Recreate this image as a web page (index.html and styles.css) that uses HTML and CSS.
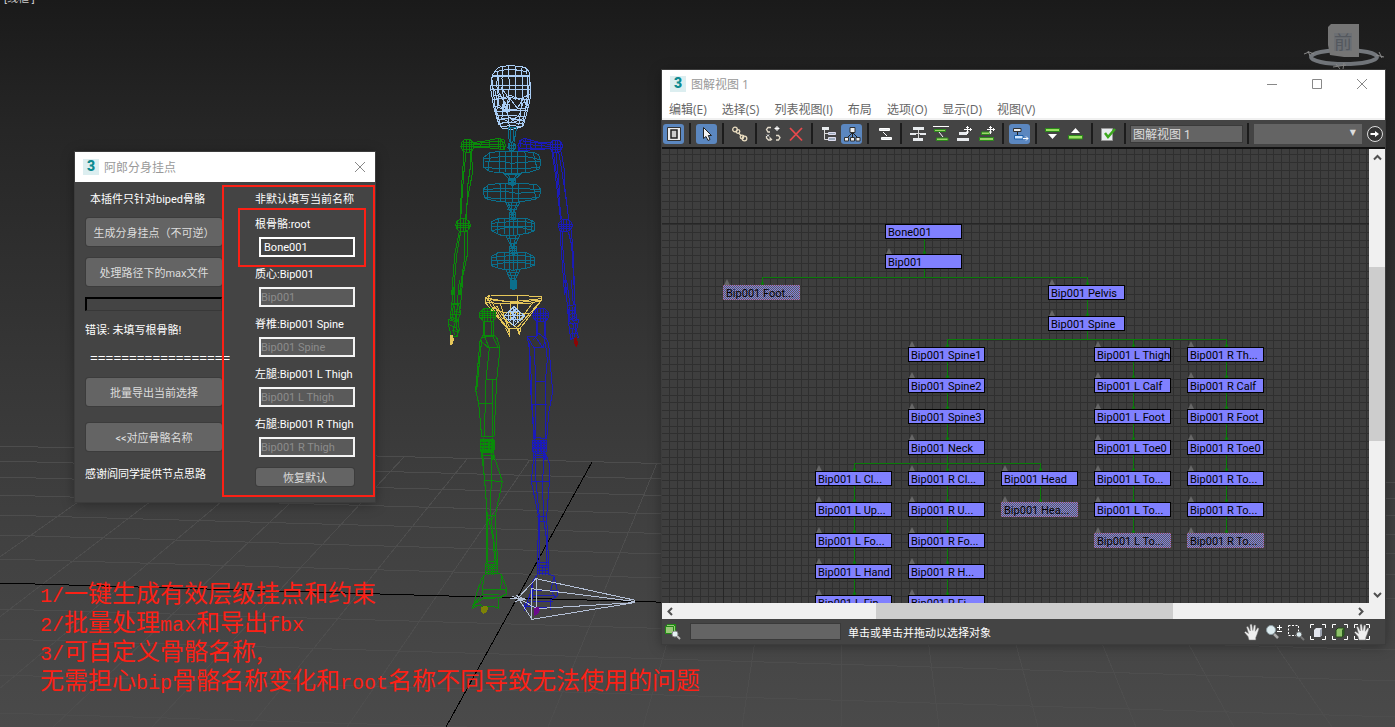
FILE: index.html
```html
<!DOCTYPE html>
<html lang="zh-CN">
<head>
  <meta charset="utf-8">
  <title>图解视图 1</title>
  <link rel="stylesheet" href="styles.css">
</head>
<body>
  <main class="viewport">
    <span class="view-label">[线框 ]</span>

    <svg class="scene" viewBox="0 0 1395 727" preserveAspectRatio="xMinYMin slice" aria-hidden="true">
      <!-- ground grid -->
      <g class="floor">
        <path d="M0 446L1395 483M0 461L1395 499M0 477L1395 516M0 495L1395 535M0 515L1395 554M0 535L1395 575M0 559L1395 599M0 609L1395 650M0 639L1395 681M0 675L1395 717M0 713L500 728"/>
        <path d="M152 450L-242 727M215 452L-144 727M278 454L-46 727M341 455L53 727M404 457L152 727M467 459L250 727M529 461L347 727M657 463L548 727M718 464L643 727M781 466L742 727M844 468L841 727M907 470L939 727M970 472L1038 727M1033 473L1136 727M1096 475L1234 727M1159 476L1332 727"/>
      </g>
      <path class="axis" d="M0 583L690 603M592 462L446 727"/>

      <!-- head, spine and arms -->
      <g class="wire" transform="translate(430 55) scale(.3333)">
        <g class="head">
          <path d="M205 37L238 31L285 37L297 50L301 90L300 135L290 175L279 214L250 223L217 221L203 200L190 150L182 100L187 60Z"/>
          <path d="M195 50L240 42L292 50M188 64H300M190 62H298M184 92L240 90L301 93M184 105H300M190 120L225 128L240 120L268 133L300 118M190 133L240 128L298 134M196 155L230 164L262 162L292 158M196 170L240 168H290M200 182L235 180L286 186M206 195L240 188L280 198M205 205L245 202L280 207M212 216L245 211L276 216"/>
          <path d="M218 36L216 70L220 130L222 165M235 32L238 90L232 160L238 215M257 33L257 100L258 135M275 38L277 90L276 130L272 170L266 210M204 48L200 90L206 130L200 170L214 218M290 45L294 95L290 140L284 178L276 215M194 105L206 150L225 168L240 130L262 160L280 130L292 160M205 60V110L225 145L215 190L240 203L268 180L280 140M212 95L240 135L225 160L235 185L255 200L280 190"/>
          <path d="M218 148H240V166H218ZM226 140L234 175M186 75L192 125L196 165L207 210M298 70L296 120L290 160"/>
        </g>
        <g class="spine">
          <path d="M234 216L238 262M242 217V265M250 217L249 262M260 217L252 262M236 217H261"/>
          <path d="M236 266L245 262L255 268L258 278L252 286L240 287L234 278ZM234 272H258M234 280H256M240 264V288M246 263V290M252 265V288"/>
          <path d="M160 308L180 293L210 289L275 289L312 293L326 300L333 320L328 342L300 351L250 357L180 350L160 336ZM163 312L210 305L290 305L330 314M163 337L210 341H285L328 336M180 293L174 345M208 291L209 350M228 289L226 352M245 290L246 356M263 290L264 355M285 292L286 352M310 295L322 345M165 320H220L245 325L330 318"/>
          <path d="M160 402L175 390L210 385L280 385L322 390L333 405L328 425L310 434L250 444L190 437L163 428ZM160 405L210 400H280L330 405M163 427L210 432L285 432L322 427M174 392V434M210 386L211 440M228 387V440M247 386L248 444M265 386L264 444M310 390L318 434M162 410L230 410L260 415L330 410"/>
          <path d="M185 500L205 491L240 489L290 490L312 500L314 527L296 534L250 542L210 540L185 528ZM185 505L230 501H290L314 506M186 527L225 519H280L312 527M205 492L202 536M225 490V538M240 490L237 541M252 490V542M264 490V540M287 490V536M305 495V532M187 515H310"/>
          <path d="M185 604L203 594L240 591L290 593L312 604L314 630L296 638L250 646L208 641L185 632ZM185 608L230 603H285L314 609M186 630L230 622H280L313 630M200 596L202 637M225 592L222 642M240 592L238 646M250 592V646M262 592V645M286 593V640M303 598V634M187 616H312"/>
          <path d="M220 355L246 380L275 355M232 356L246 378L262 356M228 445L246 480L270 443M236 445L247 480L260 445M246 445V480M228 543L247 582L270 542M238 543L248 582L258 543M228 645L248 690L270 645M238 646L249 685L260 646M222 360H274M230 452H266M232 464H262M232 552H264M236 565H260M230 652H266M234 662H262M238 672H258"/>
          <path d="M236 372H258V390H236ZM238 474H258V494H238ZM240 576H260V596H240ZM242 678H260V700L250 704L242 700ZM236 378H258M238 480H258M240 586H260M242 684H260M242 692H260M246 370V392M252 370V392M246 472V496M252 472V496M247 576V600M253 576V600M247 678V702M254 678V702M238 384H257M238 488H258M240 580H260"/>
        </g>
        <g class="green">
          <path d="M95 262L104 254H120L130 262L132 276L126 288L112 294L98 288L93 275ZM93 268H131M93 276H132M96 284H128M102 256V292M110 254V294M118 254V292M125 258V288M99 262H130"/>
          <path d="M130 262L155 260L205 250L222 254L226 272L222 284L155 276L130 279M132 266L205 258L224 262M155 260L150 278M180 254L178 278M205 250V283M212 252V284M131 274L224 276M131 270H222M215 256L222 282"/>
          <path d="M102 292L95 390L90 492M108 292L102 350L98 400L92 492M120 290L122 330L112 400L110 492M124 290L128 350L115 420L106 492M104 292H122"/>
          <path d="M80 500L90 492H108L118 500L121 512L116 524L106 530H90L80 522L77 510ZM77 506H120M77 512H122M79 519H119M84 496V526M92 490V530M100 490V530M108 492V528M115 498V524"/>
          <path d="M88 528L74 600L65 720M92 530L80 600L70 720M112 528L112 600L95 680L90 720M104 530L105 600L88 720"/>
        </g>
        <g class="blue">
          <path d="M361 264L370 256H385L395 262L398 276L392 288L378 294L366 290L360 280ZM360 270H398M360 277H398M363 284H395M368 258V292M376 256V294M384 256V294M391 260V290"/>
          <path d="M360 262L330 263L285 250L270 256L264 272L266 287L300 285L360 281M360 268L330 265L280 258M285 250L290 284M300 255L304 284M318 259V284M335 263V282M268 266L330 272L360 274M274 254L268 286M265 280H360"/>
          <path d="M366 292L375 350L383 420L392 496M370 292L380 360L394 492M386 292L396 350L408 430L416 492M394 290L404 350L405 400L416 492M378 294L390 420M404 352V376"/>
          <path d="M387 504L398 494H414L425 502L428 514L420 526L408 531H396L388 522L385 512ZM385 508H427M385 515H428M388 522H424M394 496V529M402 493V531M410 493V531M418 498V528"/>
          <path d="M390 526L395 600L404 720M396 530L400 600L410 720M415 530L425 570L434 720M424 526L430 600L434 720"/>
        </g>
      </g>

      <!-- hands, pelvis and thighs -->
      <g class="wire" transform="translate(430 280) scale(.3333)">
        <g class="green">
          <path d="M67 0L66 70L60 118M75 0L72 70M98 0L92 72L88 100M88 0L82 68M66 70H92M64 74L86 72L92 100L82 124L62 116L56 120V138L64 170M70 76L66 112L84 120L88 150L80 168L62 170M72 92L90 98M64 104H90M60 122L76 124L88 120M58 134L76 142L88 154M74 78L76 124L70 150L74 166M82 76L78 130L84 170M66 150L84 156"/>
        </g>
        <g class="blue">
          <path d="M404 0L412 75L418 110M410 0L420 75M433 0L435 75L440 118M424 0L430 76M412 77L436 74L432 110L446 120L440 150L445 172L422 178L416 130L414 100ZM420 80L418 124L430 134L426 176M428 80L426 120L438 132L434 170M414 92H434M414 104L434 100M416 118L442 122M418 132H440M420 146L442 148M422 160H444M416 112L448 120"/>
        </g>
        <path class="teal-fill" d="M242 0H260V22L250 29L240 23Z"/>
        <path class="bone-tip" d="M60 165L68 166L72 178L66 196H61Z"/>
        <path class="red-tip" d="M432 174L441 172L444 190L439 203L433 192Z"/>
        <g class="pelvis">
          <path d="M166 54L180 45L335 49V60L270 146H232L166 68ZM166 54L240 66L335 56M176 52L178 70L230 142M180 45L172 62M166 66L220 72H290L334 62M190 60L262 68L330 60M200 78L240 142M210 68L232 140M330 66L262 142M310 66L262 130M262 48L262 120M240 66L242 120M180 58L214 112L262 144M226 144L238 166L240 146M262 146L268 166L272 144M232 142L238 160M264 146L270 160M228 120L280 118M190 82L220 98L300 100"/>
        </g>
        <g class="head">
          <path d="M252 80L284 108L252 138L222 108ZM222 108H284M252 80V138M240 92L264 124M264 92L240 124M236 96H268V120H236ZM246 84L258 90L246 98L260 106L244 114L258 126"/>
        </g>
        <g class="green">
          <path d="M150 96L162 86H185L196 96L198 112L190 124H160L150 112ZM148 100H198M149 107H198M152 114H196M157 90V120M165 86V126M174 85V126M182 86V126M190 90V124M150 94H196"/>
          <path d="M160 126V166M164 126V168M186 126V166M190 124V168M158 166H192L200 172L210 205L200 300L192 470M158 166L150 185L145 240L137 330L146 370L155 470M154 172L192 168M152 182L176 204H210M155 180L140 330M164 170L178 205L168 300L163 470M190 172L206 205M168 300H200M188 300V470M146 370H188M155 470H192M160 474L158 540M188 474L190 540"/>
          <path d="M152 480H192V515H152ZM154 486H194M150 492H194M152 500H194M154 508H192M160 478V518M168 476V518M176 480V516M184 478V518M155 520L160 540M190 520L186 540M160 526H190"/>
        </g>
        <g class="blue">
          <path d="M310 94L322 85H342L354 96L356 110L348 124H320L310 112ZM306 100H356M306 108H356M310 116H352M316 90V120M324 86V126M332 85V126M340 86V126M348 92V122"/>
          <path d="M318 126L320 168M324 126V168M342 126L344 168M348 124V168M316 168L292 170L298 205L300 300L312 476M292 170L312 204H340L346 170L356 190L368 335L356 400L350 478M316 170L340 205M312 204L318 304L316 476M298 190L304 300L306 373L314 476M346 186L352 240L346 304V476M318 304H348M306 373H350M310 180L326 160L352 180M312 472L350 476M314 478L310 540M342 478L346 540"/>
          <path d="M308 482H350V516H308ZM306 490H350M308 498H350M310 506H350M316 480V518M324 480V518M332 482V516M340 480V518M312 520V540M344 520V540M312 526H348"/>
        </g>
      </g>

      <!-- shins, feet and root bone -->
      <g class="wire" transform="translate(430 440) scale(.3333)">
        <g class="green">
          <path d="M152 0H194V28L186 38H160L152 26ZM152 6H194M152 14H194M152 22H194M156 32H190M160 0V38M168 0V38M178 0V38M186 0V38"/>
          <path d="M158 38L162 100L170 200L168 375M154 36L164 120L172 230V372M186 38L184 80L182 225L200 372M190 40L217 125L196 226L203 372M162 120L217 125M160 48H190M168 226H196M170 236L182 240L194 226M176 238L190 300L194 372M170 364H202"/>
          <path d="M168 374H202V400H168ZM168 380H202M170 386H202M168 394H200M176 374V404M184 374V404M192 374V404"/>
          <path d="M170 400L156 414L140 460L128 506M200 398L214 404L228 440L230 462L206 474V506M162 406L158 440L156 465L128 496L206 502M216 404L212 446M156 448H226L230 462M156 464H206M158 474H216M128 496L158 476L196 474M128 504L152 494"/>
        </g>
        <g class="blue">
          <path d="M308 0H350V30L342 40H316L308 30ZM308 8H350M306 16H350M308 24H350M312 34H348M316 0V40M326 0V40M334 0V40M342 0V40"/>
          <path d="M312 40L304 125L326 230L322 375M316 40L318 125L328 230V375M342 40L338 125L340 230L350 300V375M346 40L358 70V130L350 230L356 376M304 125H358M312 52H352M322 230H350M326 244H348M322 368H356"/>
          <path d="M322 376H356V402H322ZM322 384H356M322 392H356M330 374V404M338 374V404M346 374V404"/>
          <path d="M324 402L310 420L298 470L284 510M354 402L372 408L382 450V468L362 480V510M308 424L306 480L284 500M306 452H380M306 468H372M308 484H370M284 500L340 502L364 504M284 490V512M372 412L362 450L376 472"/>
        </g>
        <path class="olive" d="M154 502L168 496L175 502L170 516L160 522L153 514Z"/>
        <path class="root-bone" d="M264 474L318 416L612 480L613 488L306 538ZM264 474L320 506L612 488M318 416L320 506M304 446V534M304 446L612 484M306 538L304 446M264 474L306 538M240 476H284M246 468L278 482M258 466L284 478L256 484"/>
        <path class="purple" d="M312 506L325 500L330 510L322 524L311 528Z"/>
      </g>
    </svg>

    <svg class="viewcube" viewBox="0 0 90 60" aria-hidden="true">
      <ellipse class="ring" cx="44" cy="42" rx="33" ry="7"/>
      <path class="ring-marks" d="M4 39L9 37L14 39M8 36L10 41M76 40L84 42M79 37L82 43M33 52L46 50M36 49L40 54M44 48L43 54"/>
      <path class="cube-side" d="M28 12L31 9H59V42H44L30 40L28 30Z"/>
      <rect class="cube-face" x="34" y="18" width="18" height="18"/>
      <text x="34" y="34">前</text>
    </svg>

    <section class="window tool-dialog">
      <header class="titlebar">
        <span class="app-icon">3</span>
        <h1>阿郎分身挂点</h1>
        <button class="caption-btn" aria-label="关闭">
          <svg viewBox="0 0 12 12"><path d="M1 1L11 11M11 1L1 11"/></svg>
        </button>
      </header>
      <div class="dialog-body">
        <div class="actions">
          <p class="note">本插件只针对biped骨骼</p>
          <button class="btn btn-first">生成分身挂点（不可逆）</button>
          <button class="btn">处理路径下的max文件</button>
          <div class="progress"></div>
          <p class="error">错误: 未填写根骨骼!</p>
          <p class="divider">==================</p>
          <button class="btn">批量导出当前选择</button>
          <button class="btn btn-toggle">&lt;&lt;对应骨骼名称</button>
          <p class="thanks">感谢阎同学提供节点思路</p>
        </div>
        <form class="bones">
          <p class="bones-title">非默认填写当前名称</p>
          <div class="field marked">
            <label for="root-bone">根骨骼:root</label>
            <input id="root-bone" type="text" value="Bone001">
          </div>
          <div class="field">
            <label for="mass-bone">质心:Bip001</label>
            <input id="mass-bone" type="text" value="Bip001" disabled>
          </div>
          <div class="field">
            <label for="spine-bone">脊椎:Bip001 Spine</label>
            <input id="spine-bone" type="text" value="Bip001 Spine" disabled>
          </div>
          <div class="field">
            <label for="left-bone">左腿:Bip001 L Thigh</label>
            <input id="left-bone" type="text" value="Bip001 L Thigh" disabled>
          </div>
          <div class="field">
            <label for="right-bone">右腿:Bip001 R Thigh</label>
            <input id="right-bone" type="text" value="Bip001 R Thigh" disabled>
          </div>
          <button class="btn btn-small" type="button">恢复默认</button>
        </form>
      </div>
    </section>

    <section class="window schematic">
      <header class="titlebar">
        <span class="app-icon">3</span>
        <h1>图解视图 1</h1>
        <button class="caption-btn" aria-label="最小化">
          <svg viewBox="0 0 12 12"><path d="M1 6.5H11"/></svg>
        </button>
        <button class="caption-btn" aria-label="最大化">
          <svg viewBox="0 0 12 12"><path d="M1.500 1.500H10.500V10.500H1.500Z"/></svg>
        </button>
        <button class="caption-btn" aria-label="关闭">
          <svg viewBox="0 0 12 12"><path d="M1 1L11 11M11 1L1 11"/></svg>
        </button>
      </header>
      <nav class="menubar">
        <a href="#">编辑(E)</a>
        <a href="#">选择(S)</a>
        <a href="#">列表视图(I)</a>
        <a href="#">布局</a>
        <a href="#">选项(O)</a>
        <a href="#">显示(D)</a>
        <a href="#">视图(V)</a>
      </nav>

      <div class="toolbar">
        <button class="tool active" aria-label="显示浮动框">
          <svg viewBox="0 0 18 18"><path fill="#eee" stroke="#333" d="M2.500 2.500H15.500V15.500H2.500Z"/><path fill="#ccc" stroke="#222" stroke-width="1.500" d="M6 5H12V13H6Z"/></svg>
        </button>
        <i class="sep"></i>
        <button class="tool active" aria-label="选择">
          <svg viewBox="0 0 18 18"><path fill="#f4f4f4" stroke="#222" d="M5.500 2.500V13.500L8 11.500L10 15.500L12 14.500L10.300 10.500H13.500Z"/></svg>
        </button>
        <i class="sep"></i>
        <button class="tool" aria-label="连接">
          <svg viewBox="0 0 18 18" fill="none" stroke="#e9dcc0" stroke-width="1.300"><circle cx="4" cy="4.500" r="2.300"/><circle cx="7" cy="6.500" r="1.800"/><path d="M7.500 8L10.500 11"/><circle cx="11" cy="12" r="1.800"/><circle cx="13.500" cy="13.500" r="2.300"/></svg>
        </button>
        <i class="sep"></i>
        <button class="tool" aria-label="断开选定对象">
          <svg viewBox="0 0 18 18" fill="none" stroke="#e4dccb" stroke-width="1.300"><path d="M7 2.500H4L2.500 4.500L4 7H6M12 10.500H14.500L16 12.500L14.500 15H12M2.500 11V13L4.500 15H7M5.500 12.500L8 15"/><path stroke="#fff" stroke-width="1" d="M13 1V6M10.500 3.500H15.500M11.500 2L14.500 5M14.500 2L11.500 5M3 9.500L5 11.500M5 9.500L3 11.500"/></svg>
        </button>
        <button class="tool" aria-label="删除对象">
          <svg viewBox="0 0 18 18" fill="none" stroke="#e8494c" stroke-width="1.800"><path d="M3 3L15 15.500M15 3L3 15.500"/></svg>
        </button>
        <i class="sep"></i>
        <button class="tool" aria-label="层次模式">
          <svg viewBox="0 0 18 18"><path fill="none" stroke="#ddd" d="M4.500 5V14.500H8M4.500 8.500H8"/><path fill="#e8ebee" d="M2 2H9V5H2Z"/><path fill="#9aa9bb" stroke="#dde" d="M8.500 7.500H15.500V9.500H8.500ZM8.500 12.500H15.500V15.500H8.500Z"/></svg>
        </button>
        <button class="tool active" aria-label="参考模式">
          <svg viewBox="0 0 18 18"><path fill="none" stroke="#222" d="M9.500 7V13M9 8L4 13M10 8L15 13"/><path fill="#f2f2f2" stroke="#333" d="M7 2.500H12V7.500H7ZM1.500 12.500H5.500V16H1.500ZM7.500 12.500H11.500V16H7.500ZM13 12.500H17V16H13Z"/></svg>
        </button>
        <i class="sep"></i>
        <button class="tool" aria-label="始终排列">
          <svg viewBox="0 0 18 18"><path fill="none" stroke="#fff" d="M7 7L11 11"/><path fill="#e8ebee" stroke="#fff" d="M3.500 3.500H13.500V5.500H3.500ZM5.500 12.500H15.500V14.500H5.500Z"/></svg>
        </button>
        <i class="sep"></i>
        <button class="tool" aria-label="排列子对象">
          <svg viewBox="0 0 18 18"><path fill="none" stroke="#ddd" d="M9.500 5V13M1 8.500H17"/><path fill="#e8ebee" d="M4 2H15V5H4ZM1 8H7V10H1ZM11 8H17V10H11ZM4 13H14V16H4Z"/></svg>
        </button>
        <button class="tool" aria-label="排列选定对象">
          <svg viewBox="0 0 18 18"><path fill="none" stroke="#fff" d="M1 1.500H17M7 7L11 12"/><path fill="#9bd36a" stroke="#2b8a1a" d="M2.500 4.500H13.500V6.500H2.500ZM4.500 13H16V15.500H4.500Z"/></svg>
        </button>
        <button class="tool" aria-label="释放所有对象">
          <svg viewBox="0 0 18 18"><path fill="#e8ebee" d="M4 7H12V10H4ZM2 13H14V16H2Z"/><path fill="none" stroke="#fff" d="M12.500 1V9M9 4.500H17M11 2.500H14M11 7H14M15.500 3V6"/></svg>
        </button>
        <button class="tool" aria-label="释放选定对象">
          <svg viewBox="0 0 18 18"><path fill="#9bd36a" stroke="#2b8a1a" d="M3.500 7H12V9.500H3.500ZM1.500 12.500H15.500V15.500H1.500Z"/><path fill="none" stroke="#fff" d="M12.500 1V9M9 4.500H17M11 2.500H14M11 7H14M15.500 3V6"/></svg>
        </button>
        <i class="sep"></i>
        <button class="tool active" aria-label="移动子对象">
          <svg viewBox="0 0 18 18"><path fill="#eee" stroke="#333" d="M2.500 3.500H10V6.500H2.500Z"/><path fill="none" stroke="#222" d="M6.500 7V11"/><path fill="#cfe5ff" stroke="#1b5fa8" d="M3.500 10.500H12V14H3.500Z"/><path fill="none" stroke="#fff" d="M12 13.500H17M15 11.500L17 13.500L15 15.500"/></svg>
        </button>
        <i class="sep"></i>
        <button class="tool" aria-label="展开选定项">
          <svg viewBox="0 0 18 18"><path fill="#9be063" stroke="#2b8a1a" d="M1.500 3.500H15.500V6.500H1.500Z"/><path fill="#fff" d="M4 9H13L8.500 14Z"/></svg>
        </button>
        <button class="tool" aria-label="折叠选定项">
          <svg viewBox="0 0 18 18"><path fill="#9be063" stroke="#2b8a1a" d="M1.500 10.500H15.500V14H1.500Z"/><path fill="#fff" d="M4 8H13L8.500 3Z"/></svg>
        </button>
        <i class="sep"></i>
        <button class="tool" aria-label="首选项">
          <svg viewBox="0 0 18 18"><path fill="#e8ebee" stroke="#999" d="M1.500 3.500H12.500V15.500H1.500Z"/><path fill="none" stroke="#3ca81e" stroke-width="2.500" d="M5 8L8 12L15 4"/></svg>
        </button>
        <i class="sep"></i>
        <input class="view-name" type="text" value="图解视图 1" aria-label="视图名称">
        <i class="sep"></i>
        <span class="bookmark">
          <select aria-label="书签名称"><option></option></select>
        </span>
        <button class="tool go" aria-label="转至书签">
          <svg viewBox="0 0 18 18"><circle cx="9" cy="9" r="7.500" fill="#333" stroke="#ddd"/><path fill="#fff" d="M4.500 8H9V6L13 9L9 12V10H4.500Z"/></svg>
        </button>
      </div>

      <div class="work-area">
        <div class="canvas">
          <svg class="links" aria-hidden="true">
            <defs>
              <pattern id="cells" width="31" height="31" x="30" y="13" patternUnits="userSpaceOnUse">
                <path d="M0 .5H31M0 8.500H31M0 16.500H31M0 23.500H31M.5 0V31M8.500 0V31M16.500 0V31M23.500 0V31"/>
              </pattern>
            </defs>
            <rect width="100%" height="100%" fill="url(#cells)"/>
            <path class="origin" d="M61.500 0V454M0 74.500H707"/>
            <path class="link" d="M262.500 90V103M262.500 120V128.500M100.500 134V128.500H425.500V134M425.500 151V165M425.500 182V190.500M285.500 196V190.500H564.500V196M471.500 190V196"/>
            <path class="link" d="M285.500 213V227M285.500 244V258M285.500 275V289M285.500 306V320M192.500 320V314.500H378.500V320M192.500 337V351M192.500 368V382M192.500 399V413M192.500 430V444M285.500 337V351M285.500 368V382M285.500 399V413M285.500 430V444M378.500 337V351"/>
            <path class="link" d="M471.500 213V227M471.500 244V258M471.500 275V289M471.500 306V320M471.500 337V351M471.500 368V382M564.500 213V227M564.500 244V258M564.500 275V289M564.500 306V320M564.500 337V351M564.500 368V382"/>
          </svg>
          <div class="node top" style="left:223px;top:75px">Bone001</div>
          <div class="node" style="left:223px;top:105px">Bip001</div>
          <div class="node hidden-bone" style="left:61px;top:136px">Bip001 Foot...</div>
          <div class="node" style="left:386px;top:136px">Bip001 Pelvis</div>
          <div class="node" style="left:386px;top:167px">Bip001 Spine</div>

          <div class="node" style="left:246px;top:198px">Bip001 Spine1</div>
          <div class="node" style="left:246px;top:229px">Bip001 Spine2</div>
          <div class="node" style="left:246px;top:260px">Bip001 Spine3</div>
          <div class="node" style="left:246px;top:291px">Bip001 Neck</div>

          <div class="node" style="left:153px;top:322px">Bip001 L Cl...</div>
          <div class="node" style="left:153px;top:353px">Bip001 L Up...</div>
          <div class="node" style="left:153px;top:384px">Bip001 L Fo...</div>
          <div class="node" style="left:153px;top:415px">Bip001 L Hand</div>
          <div class="node" style="left:153px;top:446px">Bip001 L Fin...</div>

          <div class="node" style="left:246px;top:322px">Bip001 R Cl...</div>
          <div class="node" style="left:246px;top:353px">Bip001 R U...</div>
          <div class="node" style="left:246px;top:384px">Bip001 R Fo...</div>
          <div class="node" style="left:246px;top:415px">Bip001 R H...</div>
          <div class="node" style="left:246px;top:446px">Bip001 R Fi...</div>

          <div class="node" style="left:339px;top:322px">Bip001 Head</div>
          <div class="node hidden-bone" style="left:339px;top:353px">Bip001 Hea...</div>

          <div class="node" style="left:432px;top:198px">Bip001 L Thigh</div>
          <div class="node" style="left:432px;top:229px">Bip001 L Calf</div>
          <div class="node" style="left:432px;top:260px">Bip001 L Foot</div>
          <div class="node" style="left:432px;top:291px">Bip001 L Toe0</div>
          <div class="node" style="left:432px;top:322px">Bip001 L To...</div>
          <div class="node" style="left:432px;top:353px">Bip001 L To...</div>
          <div class="node hidden-bone" style="left:432px;top:384px">Bip001 L To...</div>

          <div class="node" style="left:525px;top:198px">Bip001 R Th...</div>
          <div class="node" style="left:525px;top:229px">Bip001 R Calf</div>
          <div class="node" style="left:525px;top:260px">Bip001 R Foot</div>
          <div class="node" style="left:525px;top:291px">Bip001 R Toe0</div>
          <div class="node" style="left:525px;top:322px">Bip001 R To...</div>
          <div class="node" style="left:525px;top:353px">Bip001 R To...</div>
          <div class="node hidden-bone" style="left:525px;top:384px">Bip001 R To...</div>
        </div>
        <div class="scroll vertical">
          <svg viewBox="0 0 17 17"><path d="M5 10.500L8.500 7L12 10.500"/></svg>
          <div class="track"><span class="thumb"></span></div>
          <svg viewBox="0 0 17 17"><path d="M5 7L8.500 10.500L12 7"/></svg>
        </div>
      </div>
      <div class="scroll horizontal">
        <svg viewBox="0 0 17 17"><path d="M10 5L6.500 8.500L10 12"/></svg>
        <div class="track"><span class="thumb"></span></div>
        <svg viewBox="0 0 17 17"><path d="M7 5L10.500 8.500L7 12"/></svg>
      </div>

      <footer class="statusbar">
        <button class="tool" aria-label="缩放选定视口对象">
          <svg viewBox="0 0 18 18"><path fill="#9bc77a" stroke="#1f8a14" d="M1.500 3.500L3.500 1.500H11.500V8.500L9.500 10.500H1.500ZM1.500 3.500H9.500V10.500M9.500 3.500L11.500 1.500"/><circle cx="11" cy="11" r="3" fill="#e6f2f4" stroke="#888"/><path stroke="#bbb" stroke-width="2" d="M13 13L16 16"/></svg>
        </button>
        <input class="find" type="text" aria-label="查找">
        <span class="hint">单击或单击并拖动以选择对象</span>
        <div class="nav-tools">
          <button class="tool" aria-label="平移">
            <svg viewBox="0 0 18 18"><path id="hand" fill="#eee" stroke="#777" stroke-width=".5" d="M6 17L5 13.500L1.500 9.500L2.500 8.500L5.500 10.500L3.500 4L5 3.500L7.300 8L7 1.500L8.800 1.300L9.800 7.500L11 2L12.700 2.300L12.300 8.300L14.600 4.800L16 5.500L14 11.500L12.800 14.500V17Z"/></svg>
          </button>
          <button class="tool" aria-label="缩放">
            <svg viewBox="0 0 18 18"><circle cx="6" cy="7" r="4.500" fill="#dcebef" stroke="#8a9aa0"/><path stroke="#aaa" stroke-width="2.500" d="M9 11L13 15"/><path stroke="#fff" d="M12 4.500H17M14.500 2V7M12 8.500H17"/></svg>
          </button>
          <button class="tool" aria-label="缩放区域">
            <svg viewBox="0 0 18 18"><path fill="none" stroke="#fff" stroke-dasharray="2 1.500" d="M1.500 2.500H11.500V12.500H1.500Z"/><circle cx="12" cy="11.500" r="2.800" fill="#dcebef" stroke="#666"/><path stroke="#777" stroke-width="2" d="M14 14L17 17"/></svg>
          </button>
          <button class="tool" aria-label="最大化显示">
            <svg viewBox="0 0 18 18"><path fill="none" stroke="#fff" d="M1.500 5V1.500H5M13 1.500H16.500V5M1.500 13V16.500H5M13 16.500H16.500V13"/><path fill="#e3e6ee" d="M5 7L7 5H13V12L11 14H5Z"/><path fill="#99a0ae" d="M11 7L13 5V12L11 14Z"/></svg>
          </button>
          <button class="tool" aria-label="最大化显示选定对象">
            <svg viewBox="0 0 18 18"><path fill="none" stroke="#fff" d="M1.500 5V1.500H5M13 1.500H16.500V5M1.500 13V16.500H5M13 16.500H16.500V13"/><path fill="#8ec26a" stroke="#244d18" d="M5 7L7 5H13V12L11 14H5Z"/><path fill="#2c5b20" d="M11 7L13 5V12L11 14Z"/></svg>
          </button>
          <button class="tool" aria-label="平移至选定对象">
            <svg viewBox="0 0 18 18"><path fill="none" stroke="#fff" d="M1.500 5V1.500H5M13 1.500H16.500V5M1.500 13V16.500H5M13 16.500H16.500V13"/><use href="#hand"/></svg>
          </button>
        </div>
      </footer>
    </section>

    <div class="captions">
      <p><span>1/</span>一键生成有效层级挂点和约束</p>
      <p><span>2/</span>批量处理<span>max</span>和导出<span>fbx</span></p>
      <p><span>3/</span>可自定义骨骼名称,</p>
      <p>无需担心<span>bip</span>骨骼名称变化和<span>root</span>名称不同导致无法使用的问题</p>
    </div>
  </main>
</body>
</html>
```

FILE: styles.css
```css
:root {
  --panel: #444;
  --control: #646464;
  --node: #8080ff;
  --link: #0a7d0a;
  --mark: #fc2015;
  --active: #5b87c0;
  --ui-font: Roboto, "Noto Sans CJK SC", sans-serif;
}

* {
  box-sizing: border-box;
}

body {
  margin: 0;
  font-family: var(--ui-font);
  font-size: 11px;
  color: #fff;
}

p, h1 {
  margin: 0;
  font-weight: normal;
}

button, input, select {
  font: inherit;
  color: inherit;
  margin: 0;
  padding: 0;
  border: 0;
  border-radius: 0;
}

button {
  background: none;
}

/* 3D viewport */
.viewport {
  position: relative;
  min-height: 100vh;
  overflow: hidden;
  background: linear-gradient(#1a1a1a, #262626 18%, #363636 50%, #404040 72%, #4a4a4a);
}

.view-label {
  position: absolute;
  left: 4px;
  top: -9px;
  line-height: 16px;
  color: #ccc;
}

.scene {
  position: absolute;
  inset: 0;
  width: 100%;
  height: 100%;
  fill: none;
  shape-rendering: crispEdges;
}

.floor {
  stroke: #4d4d4d;
}

.axis {
  stroke: #000;
}

.wire path {
  vector-effect: non-scaling-stroke;
}

.head { stroke: #a9cdf5; }
.spine { stroke: #0b6f8c; }
.green { stroke: #0a8a0a; }
.blue { stroke: #1b1bb8; }
.pelvis { stroke: #e6c75a; }
.root-bone { stroke: #b4c0d6; }
.teal-fill { fill: #0b6f8c; }
.bone-tip { fill: #e6c75a; }
.red-tip { fill: #8c0505; }
.olive { fill: #7d8206; }
.purple { fill: #6b0a8c; }

.viewcube {
  position: absolute;
  top: 15px;
  right: 5px;
  width: 90px;
  height: 60px;
  fill: none;
}

.ring {
  stroke: #73777c;
  stroke-width: 4;
}

.ring-marks {
  stroke: #8b8b8b;
}

.cube-side {
  fill: #757575;
}

.cube-face {
  fill: #6c6f73;
}

.viewcube text {
  fill: #54585e;
  font-size: 18px;
}

/* Windows */
.window {
  position: absolute;
  background: var(--panel);
  box-shadow: 0 0 0 1px #3c3c3c, 0 2px 12px rgba(0, 0, 0, 0.35);
}

.titlebar {
  display: flex;
  align-items: center;
  height: 28px;
  padding: 0 1px 0 8px;
  background: #fff;
  color: #999;
}

.titlebar h1 {
  flex: 1;
  margin-left: 5px;
  font-family: "Open Sans", "Noto Sans CJK SC", sans-serif;
  font-size: 12px;
}

.app-icon {
  width: 16px;
  height: 16px;
  background: #dceef0;
  color: #0d8a90;
  font: 900 14px/15px Roboto, sans-serif;
  text-align: center;
}

.caption-btn {
  width: 45px;
  height: 28px;
  display: flex;
  align-items: center;
  justify-content: center;
}

.caption-btn svg {
  width: 12px;
  height: 12px;
  fill: none;
  stroke: #888;
}

/* Tool dialog */
.tool-dialog {
  left: 75px;
  top: 152px;
  width: 300px;
}

.tool-dialog .titlebar {
  height: 30px;
}

.tool-dialog .caption-btn {
  width: 28px;
}

.dialog-body {
  display: grid;
  grid-template-columns: 147px 1fr;
  padding-bottom: 5px;
}

.dialog-body p,
.dialog-body label {
  display: block;
  line-height: 16px;
  white-space: nowrap;
}

.actions {
  display: flex;
  flex-direction: column;
  padding: 10px 0 0 10px;
}

.actions .note {
  padding-left: 5px;
}

.btn {
  height: 28px;
  background: var(--control);
  border-radius: 3px;
  box-shadow: 0 0 0 1px #3c3c3c;
  color: #ddd;
  white-space: nowrap;
}

.actions .btn {
  margin: 12px 0 0 1px;
}

.actions .btn-first {
  margin-top: 10px;
}

.progress {
  height: 14px;
  margin-top: 11px;
  border: 1px solid #383838;
  border-top: 2px solid #000;
  border-left: 2px solid #000;
}

.error {
  margin-top: 12px;
}

.actions .divider {
  width: 145px;
  margin-top: 13px;
  padding-left: 5px;
  overflow: hidden;
  font-family: "Liberation Mono", monospace;
  font-size: 13px;
  line-height: 14px;
}

.actions .btn-toggle {
  margin-top: 17px;
}

.thanks {
  margin-top: 16px;
}

.bones {
  position: relative;
  margin-top: 3px;
  padding: 5px 18px 9px 31px;
  border: 2px solid var(--mark);
}

.bones .bones-title {
  line-height: 15px;
}

.field {
  position: relative;
  padding-top: 10px;
}

.field input {
  display: block;
  width: 96px;
  height: 20px;
  margin: 4px 0 0 4px;
  border: 2px solid #fff;
  background: #444;
}

.field input:disabled {
  background: #5a5a5a;
  border-color: #f4f4f4;
  color: #8c8c8c;
}

.marked input {
  padding-left: 3px;
}

/* Highlight frame over the root bone field */
.marked::after {
  content: "";
  position: absolute;
  inset: 1px -11px -10px -17px;
  border: 2px solid var(--mark);
  pointer-events: none;
}

.btn-small {
  width: 98px;
  height: 18px;
  margin: 11px 0 0 1px;
}

/* Schematic view */
.schematic {
  left: 662px;
  right: 10px;
  top: 70px;
}

.menubar {
  display: flex;
  gap: 1px;
  height: 22px;
  background: #fff;
  border-bottom: 2px solid #f0f0f0;
}

.menubar a {
  padding: 0 7px;
  font-family: "Open Sans", "Noto Sans CJK SC", sans-serif;
  font-size: 12px;
  line-height: 24px;
  color: #666;
  text-decoration: none;
  white-space: nowrap;
}

.toolbar {
  display: flex;
  align-items: center;
  gap: 2px;
  height: 29px;
  padding-left: 1px;
  border-bottom: 2px solid #111;
}

.tool {
  flex: none;
  width: 21px;
  height: 20px;
  display: flex;
  align-items: center;
  justify-content: center;
  border-radius: 3px;
}

.tool svg {
  width: 18px;
  height: 18px;
}

.tool.active {
  background: var(--active);
}

.sep {
  flex: none;
  width: 2px;
  height: 21px;
  margin: 0 3px;
  background: #1c1c1c;
}

.view-name {
  flex: 1;
  min-width: 0;
  height: 16px;
  padding-left: 2px;
  background: var(--control);
  box-shadow: 0 0 0 1px #3a3a3a;
  font-size: 12px;
  color: #ddd;
}

.bookmark {
  flex: 1;
  position: relative;
  min-width: 0;
}

.bookmark select {
  display: block;
  width: 100%;
  height: 20px;
  appearance: none;
  background: var(--control);
}

.bookmark::after {
  content: "▼";
  position: absolute;
  right: 6px;
  top: 3px;
  font-family: "DejaVu Sans", sans-serif;
  font-size: 8px;
  line-height: 12px;
  color: #ddd;
  pointer-events: none;
}

.work-area {
  display: flex;
  height: 454px;
}

.canvas {
  position: relative;
  flex: 1;
  overflow: hidden;
  background: #3e3e3e;
}

.links {
  position: absolute;
  width: 100%;
  height: 100%;
  fill: none;
  shape-rendering: crispEdges;
}

.links pattern path {
  stroke: #2f2f2f;
}

.origin {
  stroke: #262626;
}

.link {
  stroke: var(--link);
}

.node {
  position: absolute;
  width: 77px;
  height: 15px;
  padding-left: 2px;
  border: 1px solid #000;
  background: var(--node);
  color: #000;
  line-height: 15px;
  white-space: nowrap;
}

.node::before {
  content: "";
  position: absolute;
  left: 0;
  top: -7px;
  border: 3px solid transparent;
  border-top: 0;
  border-bottom: 6px solid #666;
}

.node::after {
  content: "";
  position: absolute;
  left: 37px;
  top: -4px;
  width: 3px;
  height: 3px;
  border-radius: 50%;
  background: var(--link);
}

.node.top::before,
.node.top::after {
  display: none;
}

.node.hidden-bone {
  border: 1px dotted #8a4a4a;
  background: conic-gradient(#8080e0 25%, #5c5c60 0 50%, #8080e0 0 75%, #5c5c60 0) 0 0 / 2px 2px;
}

.scroll {
  display: flex;
  background: #f0f0f0;
}

.scroll svg {
  flex: none;
  width: 17px;
  height: 17px;
  fill: none;
  stroke: #505050;
  stroke-width: 2;
}

.track {
  flex: 1;
  display: flex;
}

.track::before,
.track::after {
  content: "";
}

.thumb {
  background: #cdcdcd;
}

.vertical {
  width: 16px;
  flex-direction: column;
}

.vertical .track {
  flex-direction: column;
}

.vertical .track::before { flex: 101; }
.vertical .thumb { flex: 174; }
.vertical .track::after { flex: 145; }

.horizontal {
  height: 16px;
  padding-right: 16px;
}

.horizontal .track::before { flex: 197; }
.horizontal .thumb { flex: 297; }
.horizontal .track::after { flex: 179; }

.statusbar {
  display: flex;
  align-items: center;
  height: 25px;
  padding: 0 13px 0 0;
}

.find {
  width: 149px;
  height: 15px;
  margin: 0 8px;
  background: var(--control);
  box-shadow: 0 0 0 1px #3a3a3a;
}

.nav-tools {
  display: flex;
  gap: 1px;
  margin-left: auto;
}

/* Red feature notes */
.captions {
  position: absolute;
  left: 40px;
  top: 577px;
  font-family: "Noto Sans CJK SC", sans-serif;
  font-size: 24px;
  font-weight: 300;
  line-height: 29px;
  color: var(--mark);
  white-space: nowrap;
}

.captions p {
  height: 29px;
}

.captions span {
  font-family: "Liberation Mono", monospace;
  font-size: 20px;
  line-height: 20px;
}
```
